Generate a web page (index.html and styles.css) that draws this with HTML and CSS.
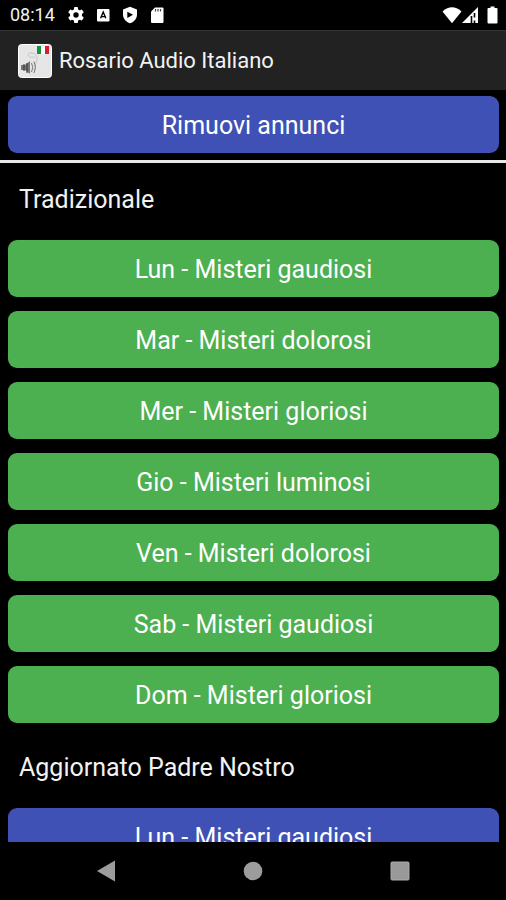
FILE: index.html
```html
<!DOCTYPE html>
<html lang="it">
<head>
  <meta charset="UTF-8" />
  <meta name="viewport" content="width=device-width, initial-scale=1" />
  <title>Rosario Audio Italiano</title>
  <link rel="stylesheet" href="styles.css">
</head>
<body>
  <div class="status-bar">
    <span class="clock">08:14</span>
    <div class="status-icons">
      <!-- settings -->
      <svg class="status-icon" viewBox="0 0 18 18">
        <g fill="#fff">
          <circle cx="9" cy="9" r="6" />
          <rect x="7" y="1" width="4" height="16" rx="1" />
          <rect x="7" y="1" width="4" height="16" rx="1" transform="rotate(60 9 9)" />
          <rect x="7" y="1" width="4" height="16" rx="1" transform="rotate(120 9 9)" />
        </g>
        <circle cx="9" cy="9" r="2.7" fill="#000" />
      </svg>
      <!-- keyboard -->
      <svg class="status-icon" viewBox="0 0 18 18">
        <rect x="3" y="3" width="12.5" height="12.5" rx="1" fill="#fff" />
        <path d="M6.6 12.3 9.2 6 11.8 12.3M7.6 10.6H10.8" fill="none" stroke="#000" stroke-width="1.4" />
      </svg>
      <!-- play protect -->
      <svg class="status-icon" viewBox="0 0 18 18">
        <path d="M9 .8 16 3.4V8.5C16 12.7 13 15.8 9 17.3 5 15.8 2 12.7 2 8.5V3.4Z" fill="#fff" />
        <path d="M6.3 5.7 12 8.8 6.3 11.9Z" fill="#000" />
      </svg>
      <!-- sd card -->
      <svg class="status-icon" viewBox="0 0 18 18">
        <path d="M7 1.5H14.5Q15.5 1.5 15.5 2.5V16Q15.5 17 14.5 17H4Q3 17 3 16V5.5Z" fill="#fff" />
        <path d="M7.5 3V5.5M10 3V5.5M12.5 3V5.5" stroke="#444" stroke-width="1.2" />
      </svg>
    </div>
    <div class="signal-icons">
      <svg width="20" height="18" viewBox="0 0 20 18">
        <path d="M.5 5.5Q10-2.8 19.5 5.5L10 17.2Z" fill="#fff" />
      </svg>
      <svg width="17" height="18" viewBox="0 0 17 18">
        <path d="M0 17 16 1V17Z" fill="#fff" />
        <path d="M9.500 10V17M12.500 7V11.500M12.500 14.500V17" stroke="#000" stroke-width="1.600" />
      </svg>
      <svg class="battery" width="11" height="18" viewBox="0 0 11 18">
        <path d="M3.5 .5H7.5V2H9.5Q10.5 2 10.5 3V16.5Q10.5 17.5 9.5 17.5H1.5Q.5 17.5 .5 16.5V3Q.5 2 1.5 2H3.5Z" fill="#fff" />
      </svg>
    </div>
  </div>

  <header class="app-bar">
    <svg class="app-logo" viewBox="0 0 34 34">
      <rect x=".5" y=".5" width="33" height="33" rx="3" fill="#e6e6e6" stroke="#fff" />
      <rect x="19" y="2" width="4" height="8" fill="#16913c" />
      <rect x="23" y="2" width="4" height="8" fill="#fff" />
      <rect x="27" y="2" width="4" height="8" fill="#d3202f" />
      <path d="M17 13C14 14 10 13 10 11S15 8 17 10 20 15 18 19 18 24 16 26" fill="none" stroke="#c4c4c4" />
      <path d="M3 21H7L12 17V30L7 26H3Z" fill="#777" />
      <path d="M6 20V27M9 19V29" stroke="#333" />
      <path d="M13.5 19Q16 23.5 13.5 28M16 17.5Q19 23.5 16 29" fill="none" stroke="#777" />
    </svg>
    <h1 class="app-title">Rosario Audio Italiano</h1>
  </header>

  <div class="ads">
    <button class="btn btn-blue">Rimuovi annunci</button>
  </div>

  <main class="list">
    <h2 class="section-title">Tradizionale</h2>
    <div class="mysteries">
      <button class="btn btn-green">Lun - Misteri gaudiosi</button>
      <button class="btn btn-green">Mar - Misteri dolorosi</button>
      <button class="btn btn-green">Mer - Misteri gloriosi</button>
      <button class="btn btn-green">Gio - Misteri luminosi</button>
      <button class="btn btn-green">Ven - Misteri dolorosi</button>
      <button class="btn btn-green">Sab - Misteri gaudiosi</button>
      <button class="btn btn-green">Dom - Misteri gloriosi</button>
    </div>
    <h2 class="section-title">Aggiornato Padre Nostro</h2>
    <div class="mysteries">
      <button class="btn btn-blue">Lun - Misteri gaudiosi</button>
    </div>
  </main>

  <nav class="nav-bar">
    <button class="nav-btn" aria-label="Indietro">
      <svg width="20" height="22" viewBox="0 0 20 22"><path d="M1 11 19 .5V21.5Z" fill="#9c9c9c" /></svg>
    </button>
    <button class="nav-btn" aria-label="Home">
      <svg width="20" height="20" viewBox="0 0 20 20"><circle cx="10" cy="10" r="9.3" fill="#9c9c9c" /></svg>
    </button>
    <button class="nav-btn" aria-label="Recenti">
      <svg width="20" height="20" viewBox="0 0 20 20"><rect x="1" y="1" width="18" height="18" rx="1" fill="#999" stroke="#aaa" /></svg>
    </button>
  </nav>
</body>
</html>
```
FILE: styles.css
```css
* {
  box-sizing: border-box;
}
body {
  margin: 0;
  height: 100vh;
  display: flex;
  flex-direction: column;
  overflow: hidden;
  background: #000;
  color: #f2f2f2;
  font-family: Roboto, sans-serif;
}
svg {
  display: block;
}
.status-bar {
  display: flex;
  align-items: center;
  height: 30px;
  padding: 0 8px 0 10px;
  flex-shrink: 0;
}
.clock {
  font-size: 18px;
  line-height: 30px;
}
.status-icons {
  display: flex;
  gap: 9px;
  margin-left: 12px;
}
.status-icon {
  width: 18px;
  height: 18px;
}
.signal-icons {
  display: flex;
  margin-left: auto;
}
.battery {
  margin-left: 8px;
}
.app-bar {
  display: flex;
  align-items: center;
  gap: 7px;
  height: 60px;
  padding: 0 18px;
  flex-shrink: 0;
  background: #222;
  border-top: 1px solid #333;
}
.app-logo {
  width: 34px;
  height: 34px;
}
.app-title {
  margin: 0;
  font-size: 22px;
  font-weight: 400;
}
.ads {
  padding: 6px 7px 7px 8px;
  flex-shrink: 0;
  border-bottom: 3px solid #e8e8e8;
}
.btn {
  display: block;
  width: 100%;
  height: 57px;
  padding: 2px 0 0;
  border: none;
  border-radius: 9px;
  color: #fff;
  font-family: inherit;
  font-size: 25px;
  cursor: pointer;
}
.btn-blue {
  background: #3f51b5;
}
.btn-green {
  background: #4caf50;
}
.list {
  flex: 1;
  min-height: 0;
  overflow: hidden;
}
.section-title {
  margin: 0;
  padding: 21px 19px 24px;
  font-size: 25px;
  font-weight: 400;
  line-height: 32px;
}
.mysteries {
  display: flex;
  flex-direction: column;
  gap: 14px;
  padding: 0 7px 0 8px;
}
.mysteries + .section-title {
  padding-top: 29px;
}
.nav-bar {
  display: flex;
  height: 58px;
  padding: 0 33px;
  flex-shrink: 0;
  background: #000;
}
.nav-btn {
  flex: 1;
  display: flex;
  align-items: center;
  justify-content: center;
  padding: 0;
  border: none;
  background: none;
  cursor: pointer;
}
```
